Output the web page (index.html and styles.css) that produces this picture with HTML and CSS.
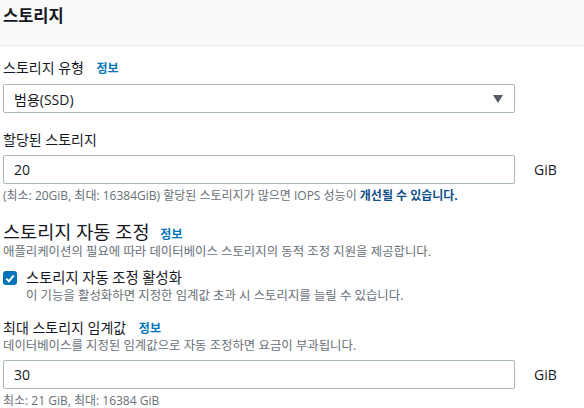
FILE: index.html
```html
<!DOCTYPE html>
<html lang="ko">
<head>
    <meta charset="UTF-8">
    <title>스토리지</title>
    <link rel="stylesheet" href="styles.css">
</head>
<body>
    <div class="panel-header">
        <h2>스토리지</h2>
    </div>

    <div class="panel-body">
        <div class="field">
            <label class="field-label">스토리지 유형 <a href="#" class="info">정보</a></label>
            <div class="select-box">
                <span>범용(SSD)</span>
                <svg class="caret" width="10" height="8" viewBox="0 0 10 8"><path d="M0 0 H10 L5 8 Z" fill="#545b64"/></svg>
            </div>
        </div>

        <div class="field field-alloc">
            <label class="field-label">할당된 스토리지</label>
            <div class="input-row">
                <div class="text-input">20</div>
                <span class="unit">GiB</span>
            </div>
            <p class="hint">(최소: 20GiB, 최대: 16384GiB) 할당된 스토리지가 많으면 IOPS 성능이 <a href="#" class="strong-link">개선될 수 있습니다.</a></p>
        </div>

        <div class="section">
            <h3>스토리지 자동 조정 <a href="#" class="info">정보</a></h3>
            <p class="desc">애플리케이션의 필요에 따라 데이터베이스 스토리지의 동적 조정 지원을 제공합니다.</p>

            <div class="check-row">
                <span class="checkbox">
                    <svg width="10" height="9" viewBox="0 0 10 9"><path d="M1.2 4.6 L3.9 7.2 L8.8 1.4" fill="none" stroke="#fff" stroke-width="2"/></svg>
                </span>
                <div>
                    <div class="check-label">스토리지 자동 조정 활성화</div>
                    <p class="desc">이 기능을 활성화하면 지정한 임계값 초과 시 스토리지를 늘릴 수 있습니다.</p>
                </div>
            </div>
        </div>

        <div class="field field-max">
            <label class="field-label">최대 스토리지 임계값 <a href="#" class="info">정보</a></label>
            <p class="desc">데이터베이스를 지정된 임계값으로 자동 조정하면 요금이 부과됩니다.</p>
            <div class="input-row">
                <div class="text-input">30</div>
                <span class="unit">GiB</span>
            </div>
            <p class="hint">최소: 21 GiB, 최대: 16384 GiB</p>
        </div>
    </div>
</body>
</html>
```

FILE: styles.css
```css
body {
    margin: 0;
    font-family: "Open Sans", "Noto Sans CJK KR", sans-serif;
    color: #16191f;
    background: #fff;
}

.panel-header {
    height: 46px;
    background-color: #fafafa;
    border-bottom: 1px solid #eaeded;
    padding: 4px 3px 0;
    box-sizing: border-box;
}

.panel-header h2 {
    margin: 0;
    font-size: 16.5px;
    line-height: 24px;
    font-weight: 700;
}

.panel-body {
    padding: 0 3px;
}

.field-label {
    display: block;
    font-size: 14px;
    line-height: 20px;
    margin-top: 12px;
}

.info {
    color: #0073bb;
    font-size: 12px;
    font-weight: 700;
    text-decoration: none;
    margin-left: 9px;
}

.select-box {
    width: 512px;
    height: 29px;
    margin-top: 5px;
    box-sizing: border-box;
    border: 1px solid #aab7b8;
    border-radius: 2px;
    display: flex;
    align-items: center;
    justify-content: space-between;
    padding: 0 11px 0 10px;
    font-size: 14px;
}

.field-alloc .field-label {
    margin-top: 17px;
}

.input-row {
    display: flex;
    align-items: center;
    gap: 19px;
    margin-top: 5px;
}

.text-input {
    width: 512px;
    height: 29px;
    box-sizing: border-box;
    border: 1px solid #aab7b8;
    border-radius: 2px;
    padding: 0 10px;
    font-size: 14px;
    line-height: 27px;
}

.unit {
    font-size: 14px;
}

.hint {
    margin: 4px 0 0;
    font-size: 12px;
    line-height: 16px;
    color: #687078;
}

.strong-link {
    color: #0f4f8a;
    font-weight: 700;
    text-decoration: none;
}

.section h3 {
    margin: 19px 0 0;
    font-size: 18.6px;
    line-height: 18px;
    font-weight: 400;
}

.section h3 .info {
    margin-left: 6px;
}

.desc {
    margin: 0;
    font-size: 12.4px;
    line-height: 16px;
    color: #687078;
}

.check-row {
    display: flex;
    gap: 9px;
    margin-top: 8px;
}

.checkbox {
    width: 14px;
    height: 14px;
    margin-top: 3px;
    border-radius: 3px;
    background-color: #0073bb;
    display: flex;
    align-items: center;
    justify-content: center;
    flex-shrink: 0;
}

.check-label {
    font-size: 14.3px;
    line-height: 20px;
}

.field-max .field-label {
    margin-top: 15px;
    line-height: 18px;
}

.field-max .input-row {
    margin-top: 6px;
}
```
